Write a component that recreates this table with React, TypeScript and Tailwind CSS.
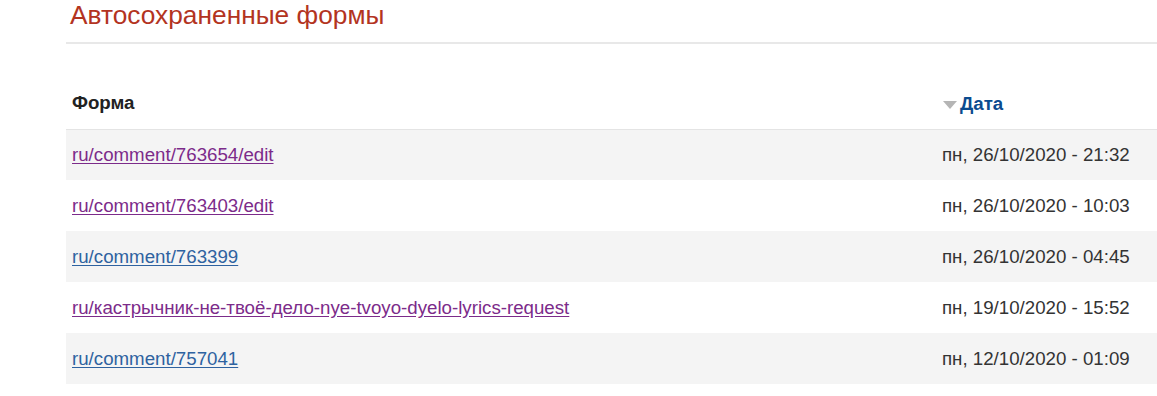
const rows = [
  { path: 'ru/comment/763654/edit', date: 'пн, 26/10/2020 - 21:32', visited: true },
  { path: 'ru/comment/763403/edit', date: 'пн, 26/10/2020 - 10:03', visited: true },
  { path: 'ru/comment/763399', date: 'пн, 26/10/2020 - 04:45', visited: false },
  { path: 'ru/кастрычник-не-твоё-дело-nye-tvoyo-dyelo-lyrics-request', date: 'пн, 19/10/2020 - 15:52', visited: true },
  { path: 'ru/comment/757041', date: 'пн, 12/10/2020 - 01:09', visited: false },
]

export default function App() {
  return (
    <div className="w-[1157px] h-[396px] overflow-hidden bg-white pl-[66px] font-['Liberation_Sans',Arial,sans-serif]">
      {/* Page title */}
      <h1 className="pl-[4px] h-[44px] text-[26.3px] leading-[30px] text-[#b3341f] border-b-2 border-[#e8e8e8]">
        Автосохраненные формы
      </h1>

      <table className="mt-[34px] w-[1091px] table-fixed border-collapse text-[18.7px] leading-[22px]">
        <thead>
          <tr className="h-[51px] border-b border-[#e4e4e4]">
            <th className="w-[870px] text-left pl-[6px] font-bold text-[#222]">Форма</th>
            <th className="text-left pl-[7px] font-bold">
              <span className="inline-flex items-center">
                <span className="w-0 h-0 border-l-[7px] border-r-[7px] border-t-[8px] border-l-transparent border-r-transparent border-t-[#b5b5b5] mr-[3px] mt-[1px]" />
                <a className="text-[#0b4b8f]">Дата</a>
              </span>
            </th>
          </tr>
        </thead>
        <tbody>
          {rows.map((row, i) => (
            <tr key={i} className={`h-[51px] ${i % 2 === 0 ? 'bg-[#f4f4f4]' : 'bg-white'}`}>
              <td className="pl-[6px]">
                <a className={`underline underline-offset-2 ${row.visited ? 'text-[#7c2b8a] decoration-[#7c2b8a]' : 'text-[#2e62a0] decoration-[#2e62a0]'}`}>
                  {row.path}
                </a>
              </td>
              <td className="pl-[6px] text-[#333] whitespace-nowrap">{row.date}</td>
            </tr>
          ))}
        </tbody>
      </table>
    </div>
  )
}
